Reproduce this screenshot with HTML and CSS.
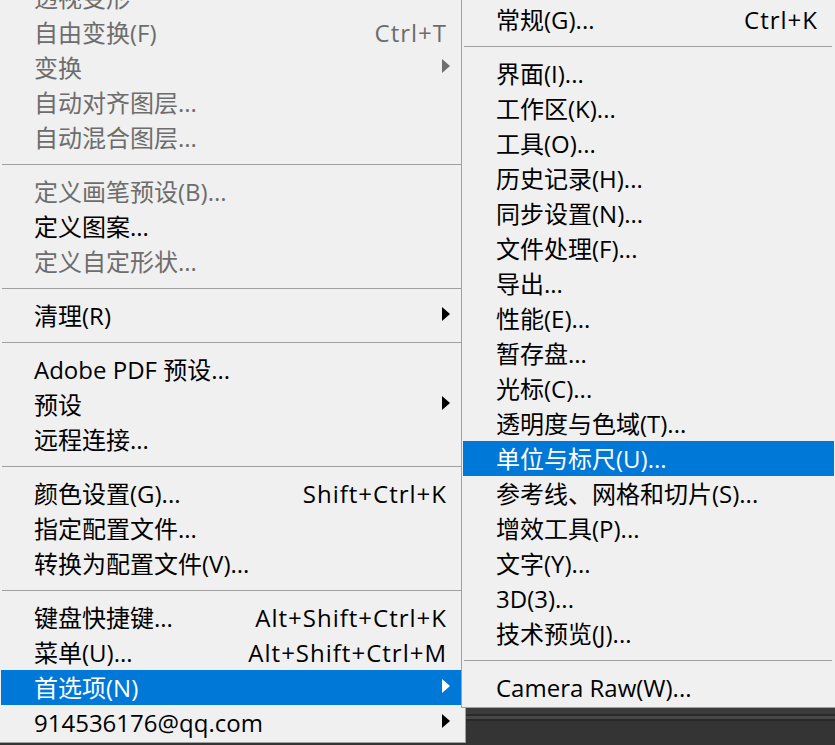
FILE: index.html
```html
<!DOCTYPE html>
<html>
	<head>
		<meta charset="utf-8">
		<link rel="stylesheet" href="styles.css">
		<title>首选项</title>
	</head>
	<body>
		<div class="screen">
			<!-- edit menu (lower part) -->
			<div class="menu main">
				<div class="item disabled"><span class="label">透视变形</span></div>
				<div class="item disabled"><span class="label">自由变换(F)</span><span class="key">Ctrl+T</span></div>
				<div class="item disabled"><span class="label">变换</span><span class="arrow"></span></div>
				<div class="item disabled"><span class="label">自动对齐图层...</span></div>
				<div class="item disabled"><span class="label">自动混合图层...</span></div>
				<div class="sep"></div>
				<div class="item disabled"><span class="label">定义画笔预设(B)...</span></div>
				<div class="item"><span class="label">定义图案...</span></div>
				<div class="item disabled"><span class="label">定义自定形状...</span></div>
				<div class="sep"></div>
				<div class="item"><span class="label">清理(R)</span><span class="arrow"></span></div>
				<div class="sep"></div>
				<div class="item"><span class="label">Adobe PDF 预设...</span></div>
				<div class="item"><span class="label">预设</span><span class="arrow"></span></div>
				<div class="item"><span class="label">远程连接...</span></div>
				<div class="sep"></div>
				<div class="item"><span class="label">颜色设置(G)...</span><span class="key">Shift+Ctrl+K</span></div>
				<div class="item"><span class="label">指定配置文件...</span></div>
				<div class="item"><span class="label">转换为配置文件(V)...</span></div>
				<div class="sep"></div>
				<div class="item"><span class="label">键盘快捷键...</span><span class="key">Alt+Shift+Ctrl+K</span></div>
				<div class="item"><span class="label">菜单(U)...</span><span class="key">Alt+Shift+Ctrl+M</span></div>
				<div class="item active"><span class="label">首选项(N)</span><span class="arrow"></span></div>
				<div class="item"><span class="label">914536176@qq.com</span><span class="arrow"></span></div>
			</div>

			<!-- preferences submenu -->
			<div class="menu sub">
				<div class="item"><span class="label">常规(G)...</span><span class="key">Ctrl+K</span></div>
				<div class="sep"></div>
				<div class="item"><span class="label">界面(I)...</span></div>
				<div class="item"><span class="label">工作区(K)...</span></div>
				<div class="item"><span class="label">工具(O)...</span></div>
				<div class="item"><span class="label">历史记录(H)...</span></div>
				<div class="item"><span class="label">同步设置(N)...</span></div>
				<div class="item"><span class="label">文件处理(F)...</span></div>
				<div class="item"><span class="label">导出...</span></div>
				<div class="item"><span class="label">性能(E)...</span></div>
				<div class="item"><span class="label">暂存盘...</span></div>
				<div class="item"><span class="label">光标(C)...</span></div>
				<div class="item"><span class="label">透明度与色域(T)...</span></div>
				<div class="item active"><span class="label">单位与标尺(U)...</span></div>
				<div class="item"><span class="label">参考线、网格和切片(S)...</span></div>
				<div class="item"><span class="label">增效工具(P)...</span></div>
				<div class="item"><span class="label">文字(Y)...</span></div>
				<div class="item"><span class="label">3D(3)...</span></div>
				<div class="item"><span class="label">技术预览(J)...</span></div>
				<div class="sep"></div>
				<div class="item"><span class="label">Camera Raw(W)...</span></div>
			</div>
		</div>
	</body>
</html>
```

FILE: styles.css
```css
html {
	background-color: #333333;
}
body {
	margin: 0;
	height: 745px;
	overflow: hidden;
	font-family: "Open Sans", "Noto Sans CJK SC", sans-serif;
	font-size: 24px;
	color: #000000;
	/* dark workspace with the options bar lines peeking out below the menus */
	background: linear-gradient(to bottom,
		#3c3c3c 0, #3c3c3c 714px,
		#292929 714px, #292929 716px,
		#474747 716px, #474747 719px,
		#292929 719px, #292929 721px,
		#343434 721px);
}

div.screen {
	display: flex;
	align-items: flex-start;
}

div.menu {
	background-color: #f0f0f0;
	border: 1px solid #a0a0a0;
	flex-shrink: 0;
}
div.main {
	margin-left: -2px;
	margin-top: -23px;
	padding: 2px;
	box-sizing: border-box;
	width: 468px;
}
div.sub {
	position: relative;
	z-index: 1;
	width: 376px;
	box-sizing: border-box;
	margin-left: -5px;
	margin-top: -1px;
	padding: 2px 2px 2px 1px;
}

div.item {
	display: flex;
	align-items: center;
	height: 35px;
	padding-left: 33px;
	white-space: nowrap;
}
div.item span.label {
	flex: 1;
	line-height: 35px;
	height: 35px;
}
div.item span.key {
	margin-right: 16px;
	letter-spacing: 1px;
	line-height: 35px;
	height: 35px;
}
div.item span.arrow {
	width: 0;
	height: 0;
	border-left: 8px solid #000000;
	border-top: 7px solid transparent;
	border-bottom: 7px solid transparent;
	margin-right: 13px;
	margin-bottom: 3px;
}

div.item.disabled {
	color: #6d6d6d;
}
div.item.disabled span.arrow {
	border-left-color: #6d6d6d;
}
div.item.active {
	background-color: #0078d7;
	color: #ffffff;
}
div.item.active span.arrow {
	border-left-color: #ffffff;
}

div.sep {
	height: 1px;
	background-color: #a0a0a0;
	margin: 9px 2px 9px 1px;
}
```
